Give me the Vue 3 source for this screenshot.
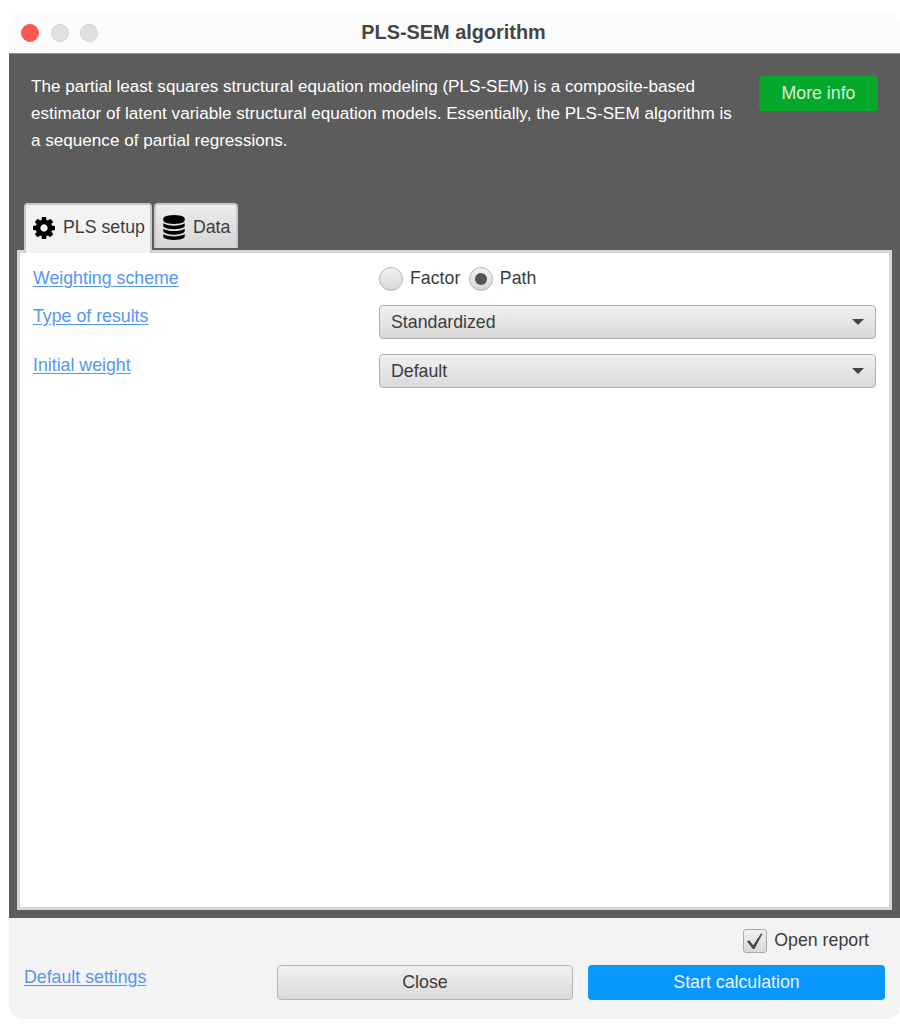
<template>
  <div class="page">
    <div class="window">
      <header class="titlebar">
        <div class="lights">
          <span class="light red"></span>
          <span class="light"></span>
          <span class="light"></span>
        </div>
        <h1 class="title">PLS-SEM algorithm</h1>
      </header>

      <main class="dark">
        <section class="intro">
          <p class="intro-text">
            The partial least squares structural equation modeling (PLS-SEM) is a composite-based
            estimator of latent variable structural equation models. Essentially, the PLS-SEM algorithm is
            a sequence of partial regressions.
          </p>
          <button class="more-info">More info</button>
        </section>

        <div class="tabs">
          <div class="tab active">
            <svg class="tab-icon" viewBox="128 128 1536 1536" width="22" height="22">
              <path fill="#000" d="M1152 896q0-106-75-181t-181-75-181 75-75 181 75 181 181 75 181-75 75-181zm512-109v222q0 12-8 23t-20 13l-185 28q-19 54-39 91 35 50 107 138 10 12 10 25t-9 23q-27 37-99 108t-94 71q-12 0-26-9l-138-108q-44 23-91 38-16 136-29 186-7 28-36 28h-222q-14 0-24.500-8.500t-11.500-21.500l-28-184q-49-16-90-37l-141 107q-10 9-25 9-14 0-25-11-126-114-165-168-7-10-7-23 0-12 8-23 15-21 51-66.500t54-70.500q-27-50-41-99l-183-27q-13-2-21-12.500t-8-23.500v-222q0-12 8-23t19-13l186-28q14-46 39-92-40-57-107-138-10-12-10-24 0-10 9-23 26-36 98.500-107.500t94.500-71.500q13 0 26 10l138 107q44-23 91-38 16-136 29-186 7-28 36-28h222q14 0 24.500 8.500t11.500 21.500l28 184q49 16 90 37l142-107q9-9 24-9 13 0 25 10 129 119 165 170 7 8 7 22 0 12-8 23-15 21-51 66.500t-54 70.500q26 50 41 98l183 28q13 2 21 12.500t8 23.500z" />
            </svg>
            <span>PLS setup</span>
          </div>
          <div class="tab">
            <svg class="tab-icon" viewBox="128 0 1536 1792" width="22" height="25">
              <path fill="#000" d="M896 768q237 0 443-43t325-127v170q0 69-103 128t-280 93.500-385 34.500-385-34.500-280-93.500-103-128v-170q119 84 325 127t443 43zm0 768q237 0 443-43t325-127v170q0 69-103 128t-280 93.500-385 34.500-385-34.500-280-93.500-103-128v-170q119 84 325 127t443 43zm0-384q237 0 443-43t325-127v170q0 69-103 128t-280 93.500-385 34.500-385-34.500-280-93.500-103-128v-170q119 84 325 127t443 43zm0-1152q208 0 385 34.500t280 93.500 103 128v128q0 69-103 128t-280 93.500-385 34.500-385-34.500-280-93.500-103-128v-128q0-69 103-128t280-93.500 385-34.500z" />
            </svg>
            <span>Data</span>
          </div>
        </div>

        <section class="panel">
          <div class="form-row radio-row">
            <a class="link">Weighting scheme</a>
            <div class="radios">
              <label class="radio"><span class="radio-dot"></span>Factor</label>
              <label class="radio"><span class="radio-dot checked"></span>Path</label>
            </div>
          </div>
          <div class="form-row">
            <a class="link">Type of results</a>
            <div class="select">Standardized<span class="caret"></span></div>
          </div>
          <div class="form-row">
            <a class="link">Initial weight</a>
            <div class="select">Default<span class="caret"></span></div>
          </div>
        </section>
      </main>

      <footer class="footer">
        <div class="report-row">
          <span class="checkbox">
            <svg viewBox="0 0 24 24" width="24" height="24">
              <path d="M4 12.500l2.200-1.200 4 5L18 4.500h1.600L11.500 20H9.800z" fill="#4a4a4a" />
            </svg>
          </span>
          <span>Open report</span>
        </div>
        <div class="actions">
          <a class="link default-link">Default settings</a>
          <button class="btn close">Close</button>
          <button class="btn start">Start calculation</button>
        </div>
      </footer>
    </div>
  </div>
</template>

<script setup>
</script>

<style>
html,
body {
  margin: 0;
  background: #fff;
}
</style>

<style scoped>
.page {
  width: 900px;
  height: 1027px;
  box-sizing: border-box;
  padding: 12px 0 8px 9px;
  font-family: "Liberation Sans", Arial, sans-serif;
  color: #3c3c3c;
  font-size: 17.75px;
}

.window {
  height: 100%;
  display: flex;
  flex-direction: column;
  border-radius: 14px;
  overflow: hidden;
  background: #f3f3f3;
}

/* Barra de titulo */
.titlebar {
  flex: 0 0 42px;
  box-sizing: border-box;
  display: flex;
  align-items: center;
  justify-content: center;
  position: relative;
  background: #fcfcfc;
  border-bottom: 1px solid #8c8c8c;
}

.lights {
  position: absolute;
  left: 12px;
  top: 12px;
  display: flex;
  gap: 11.5px;
}

.light {
  width: 18px;
  height: 18px;
  box-sizing: border-box;
  border-radius: 50%;
  background: #e0e0e0;
  border: 1px solid #d2d2d2;
}

.light.red {
  background: #fc5753;
  border-color: #fc5753;
}

.title {
  margin: 0 0 0 -2px;
  font-size: 19.9px;
  font-weight: 700;
  color: #454545;
}

/* Area escura */
.dark {
  flex: 1;
  min-height: 0;
  display: flex;
  flex-direction: column;
  background: #5c5c5c;
  padding: 0 8px 8px;
}

.intro {
  flex: 0 0 149px;
  display: flex;
  justify-content: space-between;
  align-items: flex-start;
  box-sizing: border-box;
  padding: 19px 14px 0 14px;
}

.intro-text {
  margin: 0;
  width: 712px;
  font-size: 17.1px;
  line-height: 27px;
  color: #fff;
}

.more-info {
  width: 119px;
  height: 35px;
  margin-top: 3px;
  border: 0;
  border-radius: 4px;
  background: #05a82a;
  color: #d7eedb;
  font: 17.75px "Liberation Sans", Arial, sans-serif;
}

.tabs {
  display: flex;
  gap: 2px;
  padding-left: 7px;
  height: 47px;
  align-items: flex-start;
}

.tab {
  height: 45px;
  box-sizing: border-box;
  display: flex;
  align-items: center;
  gap: 8px;
  padding: 1px 6px 0 7px;
  border: 2px solid #c8c8c8;
  border-bottom: 0;
  border-radius: 4px 4px 0 0;
  background: linear-gradient(#ececec, #d6d6d6);
}

.tab.active {
  height: 50px;
  padding: 0 5px 3px 7px;
  background: #f3f3f3;
  position: relative;
  z-index: 1;
}

.tab-icon {
  flex: none;
}

.panel {
  flex: 1;
  min-height: 0;
  box-sizing: border-box;
  background: #fff;
  border: 3px solid #d6d6d6;
  padding: 12px 13px 0 13px;
}

.form-row {
  display: flex;
  align-items: flex-start;
  margin-bottom: 15px;
}

.form-row .link {
  flex: 0 0 346px;
  padding-top: 1px;
}

.radio-row {
  margin-bottom: 13px;
  align-items: center;
  height: 27px;
}

.radio-row .link {
  padding-top: 0;
}

.link {
  color: #5596f4;
  text-decoration: underline;
  text-underline-offset: 2px;
}

.radios {
  display: flex;
  gap: 8.5px;
}

.radio {
  display: flex;
  align-items: center;
  gap: 7px;
}

.radio-dot {
  width: 24px;
  height: 24px;
  box-sizing: border-box;
  border-radius: 50%;
  border: 1px solid #b4b4b4;
  background: linear-gradient(#f2f2f2, #d8d8d8);
  display: flex;
  align-items: center;
  justify-content: center;
}

.radio-dot.checked::after {
  content: "";
  width: 12px;
  height: 12px;
  border-radius: 50%;
  background: #555;
}

.select {
  flex: 1;
  height: 34px;
  box-sizing: border-box;
  display: flex;
  align-items: center;
  justify-content: space-between;
  padding: 0 11px;
  border: 1px solid #b0b0b0;
  border-radius: 4px;
  background: linear-gradient(#f1f1f1, #d9d9d9);
}

.caret {
  width: 0;
  height: 0;
  border-left: 6px solid transparent;
  border-right: 6px solid transparent;
  border-top: 6px solid #444;
}

/* Rodape */
.footer {
  flex: 0 0 101px;
  box-sizing: border-box;
  display: flex;
  flex-direction: column;
  padding: 10px 15px 0;
}

.report-row {
  display: flex;
  align-items: center;
  justify-content: flex-end;
  gap: 7px;
  padding-right: 16px;
  height: 25px;
}

.checkbox {
  width: 24px;
  height: 24px;
  box-sizing: border-box;
  border: 1px solid #aaa;
  border-radius: 3px;
  background: linear-gradient(#f0f0f0, #d9d9d9);
}

.checkbox svg {
  display: block;
  margin: -1px;
}

.actions {
  display: flex;
  align-items: center;
  margin-top: 12px;
}

.default-link {
  flex: none;
  width: 253px;
  margin-top: -10px;
}

.btn {
  height: 35px;
  box-sizing: border-box;
  border-radius: 4px;
  font: 17.75px "Liberation Sans", Arial, sans-serif;
}

.close {
  width: 296px;
  color: #3c3c3c;
  border: 1px solid #b4b4b4;
  background: linear-gradient(#f1f1f1, #d9d9d9);
}

.start {
  width: 297px;
  margin-left: 15px;
  border: 0;
  color: #e9f5ff;
  background: #0a96ff;
}
</style>
